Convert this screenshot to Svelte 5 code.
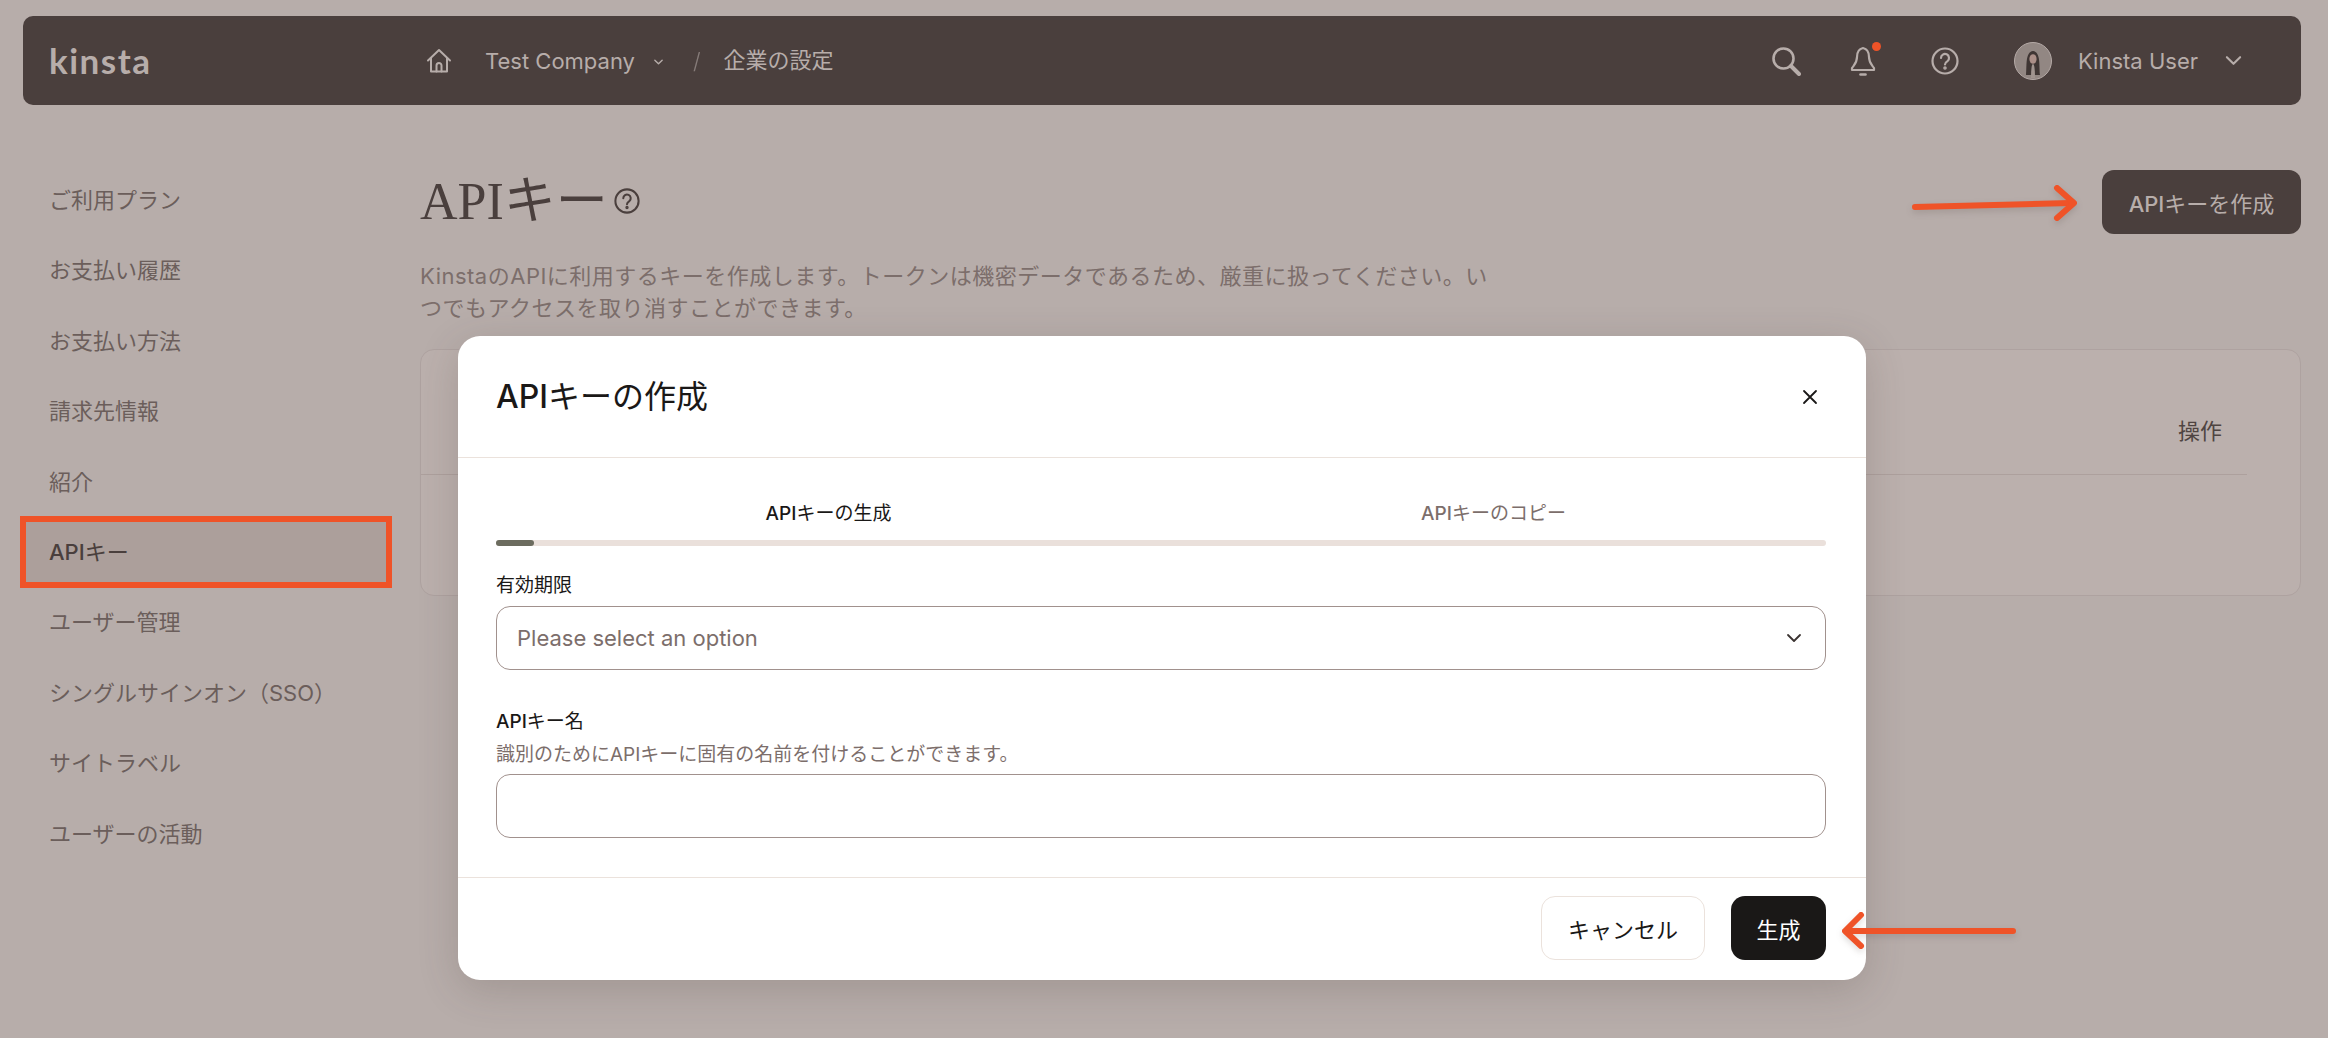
<script lang="ts">
	const navItems = [
		'ご利用プラン',
		'お支払い履歴',
		'お支払い方法',
		'請求先情報',
		'紹介',
		'APIキー',
		'ユーザー管理',
		'シングルサインオン（SSO）',
		'サイトラベル',
		'ユーザーの活動'
	];
	const activeItem = 'APIキー';
</script>

<div class="page">
	<header class="topbar">
		<div class="logo">kinsta</div>
		<nav class="crumbs">
			<svg class="home" viewBox="0 0 26 26" fill="none" stroke="currentColor" stroke-width="2" stroke-linejoin="round" stroke-linecap="round">
				<path d="M2 12.5 13 2l11 10.5" />
				<path d="M5 10v13.5h16V10" />
				<path d="M10.5 23.5v-6a2.5 2.5 0 0 1 5 0v6" />
			</svg>
			<span class="company">Test Company</span>
			<svg class="chev-small" viewBox="0 0 12 8" fill="none" stroke="currentColor" stroke-width="1.5" stroke-linecap="round" stroke-linejoin="round"><path d="M2 2l4 4 4-4" /></svg>
			<span class="slash">/</span>
			<span class="crumb-jp">企業の設定</span>
		</nav>
		<div class="tools">
			<svg class="tool search" viewBox="0 0 30 30" fill="none" stroke="currentColor" stroke-width="2.6" stroke-linecap="round">
				<circle cx="12.5" cy="12.5" r="10" />
				<path d="M20 20l8 8" stroke-width="4" />
			</svg>
			<span class="bell-wrap">
				<svg class="tool bell" viewBox="0 0 26 30" fill="none" stroke="currentColor" stroke-width="2.2" stroke-linecap="round" stroke-linejoin="round">
					<path d="M13 2c-4.500 1-6 5-6 9 0 6-3 8-5 11v2h22v-2c-2-3-5-5-5-11 0-4-1.500-8-6-9z" />
					<path d="M10.500 28.500h5" stroke-width="2.600" />
				</svg>
				<span class="bell-dot"></span>
			</span>
			<svg class="tool help" viewBox="0 0 28 28" fill="none" stroke="currentColor" stroke-width="2.200" stroke-linecap="round">
				<circle cx="14" cy="14" r="12.500" />
				<path d="M10 11a4 4 0 1 1 6.500 3.100c-1.500 1-2.500 1.700-2.500 3.400" />
				<circle cx="14" cy="21" r=".7" fill="currentColor" />
			</svg>
			<div class="user">
				<svg class="avatar" viewBox="0 0 38 38">
					<circle cx="19" cy="19" r="18.500" fill="#928783" stroke="#b5aaa7" stroke-width="1" />
					<path d="M12 33c1-9-1-23 7-24 8 1 6 15 7 24z" fill="#3f3634" />
					<ellipse cx="19" cy="17" rx="3.600" ry="4.800" fill="#ab8f88" />
					<path d="M17 36c0-7 .5-14 2-14s2 7 2 14z" fill="#a0948f" />
				</svg>
				<span class="user-name">Kinsta User</span>
				<svg class="chev-user" viewBox="0 0 18 12" fill="none" stroke="currentColor" stroke-width="2.200" stroke-linecap="round" stroke-linejoin="round"><path d="M2 2l7 7 7-7" /></svg>
			</div>
		</div>
	</header>

	<div class="layout">
		<aside class="sidebar">
			{#each navItems as item}
				<div class="nav-item" class:active={item === activeItem}>
					{#if item === activeItem}<span class="latin">API</span>キー{:else}{item}{/if}
				</div>
			{/each}
		</aside>

		<main class="main">
			<div class="title-row">
				<div class="title">
					<h1>APIキー</h1>
					<svg class="title-help" viewBox="0 0 28 28" fill="none" stroke="currentColor" stroke-width="2.200" stroke-linecap="round">
						<circle cx="14" cy="14" r="12.500" />
						<path d="M10 11a4 4 0 1 1 6.500 3.100c-1.500 1-2.500 1.700-2.500 3.400" />
						<circle cx="14" cy="21" r=".7" fill="currentColor" />
					</svg>
				</div>
				<button class="create"><span class="latin">API</span>キーを作成</button>
			</div>
			<p class="desc">KinstaのAPIに利用するキーを作成します。トークンは機密データであるため、厳重に扱ってください。いつでもアクセスを取り消すことができます。</p>
			<section class="card">
				<div class="card-head"><span>操作</span></div>
			</section>
		</main>
	</div>

	<div class="modal">
		<div class="modal-head">
			<h2><span class="latin">API</span>キーの作成</h2>
			<svg class="close" viewBox="0 0 16 16" fill="none" stroke="currentColor" stroke-width="1.800" stroke-linecap="round"><path d="M2 2l12 12M14 2 2 14" /></svg>
		</div>
		<div class="modal-body">
			<div class="steps">
				<div class="step current"><span class="latin">API</span>キーの生成</div>
				<div class="step"><span class="latin">API</span>キーのコピー</div>
			</div>
			<div class="progress"><div class="progress-fill"></div></div>
			<div class="field first">
				<div class="label">有効期限</div>
				<div class="select">
					<span>Please select an option</span>
					<svg viewBox="0 0 16 10" fill="none" stroke="currentColor" stroke-width="1.800" stroke-linecap="round" stroke-linejoin="round"><path d="M2 2l6 6 6-6" /></svg>
				</div>
			</div>
			<div class="field second">
				<div class="label"><span class="latin">API</span>キー名</div>
				<div class="hint">識別のためにAPIキーに固有の名前を付けることができます。</div>
				<div class="input"></div>
			</div>
		</div>
		<div class="modal-foot">
			<button class="btn-cancel">キャンセル</button>
			<button class="btn-generate">生成</button>
		</div>
	</div>

	<svg class="arrow arrow-top" viewBox="0 0 172 38" fill="none" stroke="#ef5328" stroke-width="6" stroke-linecap="round" stroke-linejoin="round">
		<path d="M4 23 160 19" />
		<path d="M146 4l17 15-17 15" />
	</svg>
	<svg class="arrow arrow-bottom" viewBox="0 0 180 38" fill="none" stroke="#ef5328" stroke-width="6" stroke-linecap="round" stroke-linejoin="round">
		<path d="M175 20H9" />
		<path d="M23 4 7 20l16 15" />
	</svg>
</div>

<style>
	:global(body) {
		margin: 0;
		background: #b7adaa;
		overflow: hidden;
	}

	.page {
		position: relative;
		width: 2328px;
		height: 1038px;
		padding: 16px 27px 0 23px;
		box-sizing: border-box;
		overflow: hidden;
		font-family: Inter, "Noto Sans CJK JP", sans-serif;
		font-size: 22px;
		color: #4a3f3d;
	}

	.latin {
		font-weight: 500;
	}

	.topbar {
		display: flex;
		align-items: center;
		height: 89px;
		background: #4a3f3d;
		border-radius: 10px;
		color: #b7adaa;
	}

	.logo {
		width: 390px;
		padding-left: 26px;
		box-sizing: border-box;
		font-family: Lato, sans-serif;
		font-size: 35px;
		font-weight: 700;
		letter-spacing: 1.5px;
		line-height: 1;
		flex-shrink: 0;
	}

	.crumbs {
		display: flex;
		align-items: center;
		flex: 1;
		margin-left: 13px;
	}

	.home {
		width: 26px;
		height: 26px;
		margin-right: 33px;
	}

	.chev-small {
		width: 11px;
		height: 8px;
		margin: 2px 29px 0 18px;
	}

	.slash {
		opacity: 0.55;
		margin-right: 23px;
		font-weight: 300;
	}

	.crumb-jp {
		margin-top: -5px;
	}

	.tools {
		display: flex;
		align-items: center;
		padding-right: 59px;
	}

	.tool {
		display: block;
	}

	.search {
		width: 30px;
		height: 30px;
		margin-right: 49px;
	}

	.bell-wrap {
		position: relative;
		display: block;
		margin-right: 55px;
	}

	.bell {
		width: 26px;
		height: 30px;
	}

	.bell-dot {
		position: absolute;
		top: -4px;
		right: -5px;
		width: 9px;
		height: 9px;
		border-radius: 50%;
		background: #ef5328;
	}

	.help {
		width: 28px;
		height: 28px;
		margin-right: 55px;
	}

	.user {
		display: flex;
		align-items: center;
	}

	.avatar {
		width: 38px;
		height: 38px;
		margin-right: 26px;
	}

	.chev-user {
		width: 17px;
		height: 12px;
		margin-left: 27px;
	}

	.layout {
		display: grid;
		grid-template-columns: 397px 1fr;
	}

	.sidebar {
		display: flex;
		flex-direction: column;
		gap: 10.4px;
		margin: 65px 0 0 3px;
		width: 360px;
	}

	.nav-item {
		height: 60px;
		line-height: 60px;
		padding-left: 23px;
		color: #6b5e5b;
	}

	.nav-item.active {
		background: #ac9f9b;
		color: #4a3f3d;
		outline: 6px solid #ef5328;
	}

	.main {
		padding-top: 65px;
	}

	.title-row {
		display: flex;
		justify-content: space-between;
		align-items: flex-start;
		height: 64px;
	}

	.title {
		display: flex;
		align-items: center;
		height: 64px;
	}

	h1 {
		margin: 0;
		font-family: "Liberation Serif", "Noto Sans CJK JP", serif;
		font-size: 52px;
		font-weight: 400;
		line-height: 64px;
		color: #4a3f3d;
	}

	.title-help {
		width: 26px;
		height: 26px;
		margin: -2px 0 0 6px;
		color: #4a3f3d;
	}

	.create {
		width: 199px;
		height: 64px;
		padding: 0;
		border: none;
		border-radius: 12px;
		background: #4a3f3d;
		color: #b7adaa;
		font: 400 22px Inter, "Noto Sans CJK JP", sans-serif;
	}

	.desc {
		width: 1072px;
		margin: 26px 0 0;
		line-height: 32px;
		letter-spacing: 0.5px;
		color: #7c6e6b;
	}

	.card {
		height: 247px;
		margin-top: 25px;
		padding: 0 53px 0 0;
		box-sizing: border-box;
		border: 1px solid #aea2a0;
		border-radius: 14px;
		background: #bbb0ad;
	}

	.card-head {
		display: flex;
		justify-content: flex-end;
		align-items: center;
		height: 125px;
		box-sizing: border-box;
		padding: 33px 25px 0 0;
		border-bottom: 1px solid #ada09d;
		color: #4f4441;
	}

	.modal {
		position: absolute;
		left: 458px;
		top: 336px;
		width: 1408px;
		height: 644px;
		display: flex;
		flex-direction: column;
		background: #fff;
		border-radius: 22px;
		box-shadow: 0 10px 40px rgba(70, 55, 50, 0.2);
		color: #1a1817;
	}

	.modal-head {
		display: flex;
		justify-content: space-between;
		align-items: center;
		height: 122px;
		flex-shrink: 0;
		padding: 0 48px 0 38px;
		box-sizing: border-box;
		border-bottom: 1px solid #ebe2dc;
	}

	h2 {
		margin: -6px 0 0;
		font-size: 32px;
		font-weight: 400;
	}

	.close {
		width: 16px;
		height: 16px;
	}

	.modal-body {
		flex: 1;
		padding: 0 40px 0 38px;
	}

	.steps {
		display: grid;
		grid-template-columns: 1fr 1fr;
		height: 82px;
		padding-top: 37px;
		box-sizing: border-box;
		font-size: 19px;
		line-height: 38px;
		text-align: center;
		color: #7c6e6b;
	}

	.step.current {
		color: #1a1817;
	}

	.progress {
		height: 6px;
		border-radius: 3px;
		background: #eae0db;
	}

	.progress-fill {
		width: 38px;
		height: 6px;
		border-radius: 3px;
		background: #6c6c5f;
	}

	.field.first {
		margin-top: 27px;
	}

	.field.second {
		margin-top: 39px;
	}

	.label {
		font-size: 19px;
		line-height: 26px;
	}

	.hint {
		margin-top: 7px;
		font-size: 19px;
		line-height: 26px;
		color: #7c6e6b;
	}

	.select,
	.input {
		height: 64px;
		margin-top: 7px;
		box-sizing: border-box;
		border: 1px solid #a1918d;
		border-radius: 14px;
	}

	.input {
		margin-top: 6px;
	}

	.select {
		display: flex;
		justify-content: space-between;
		align-items: center;
		padding: 0 23px 0 20px;
		color: #7c6e6b;
	}

	.select svg {
		width: 16px;
		height: 10px;
		color: #3a3331;
	}

	.modal-foot {
		display: flex;
		justify-content: flex-end;
		align-items: center;
		gap: 26px;
		height: 103px;
		flex-shrink: 0;
		padding-right: 40px;
		padding-bottom: 2px;
		box-sizing: border-box;
		border-top: 1px solid #ebe2dc;
	}

	.modal-foot button {
		height: 64px;
		padding: 0;
		border-radius: 14px;
		font: 400 22px Inter, "Noto Sans CJK JP", sans-serif;
	}

	.btn-cancel {
		width: 164px;
		border: 1px solid #ebe2dc;
		background: #fff;
		color: #1a1817;
	}

	.btn-generate {
		width: 95px;
		border: none;
		background: #1a1817;
		color: #fff;
	}

	.arrow {
		position: absolute;
		filter: drop-shadow(0 3px 3px rgba(70, 55, 50, 0.18));
	}

	.arrow-top {
		left: 1911px;
		top: 184px;
		width: 172px;
		height: 38px;
	}

	.arrow-bottom {
		left: 1838px;
		top: 911px;
		width: 180px;
		height: 38px;
	}
</style>
